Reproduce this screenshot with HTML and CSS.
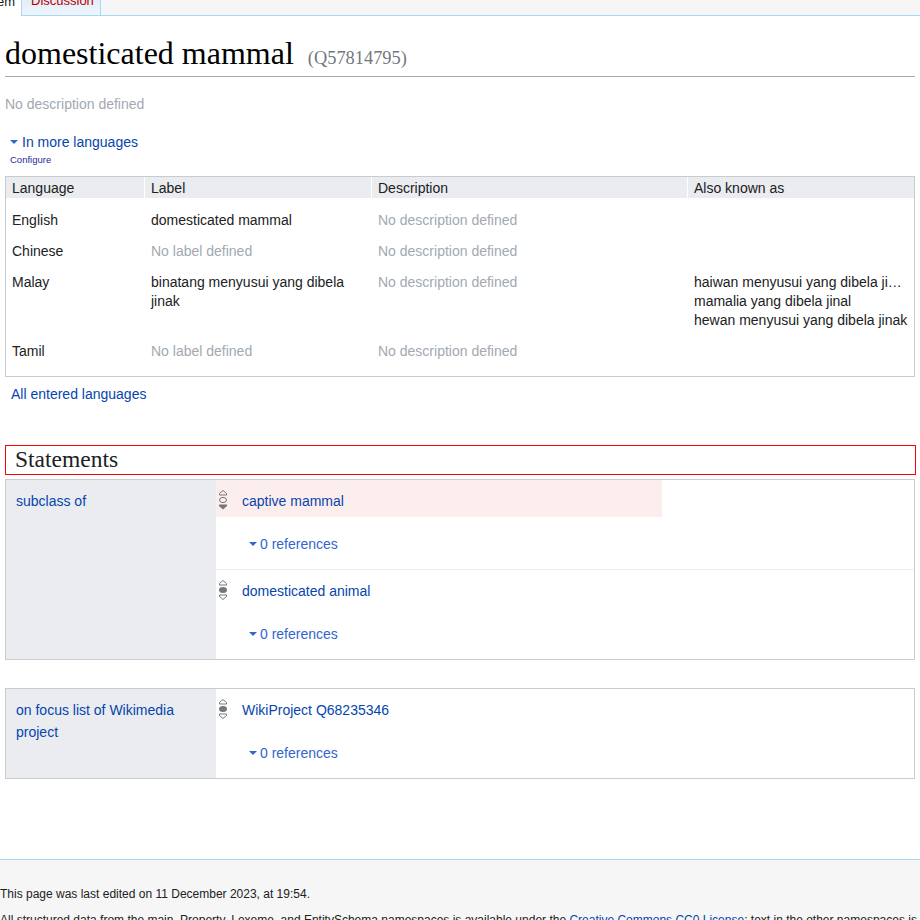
FILE: index.html
```html
<!DOCTYPE html>
<html lang="en">
<head>
<meta charset="utf-8">
<title>domesticated mammal - Wikidata</title>
<link rel="stylesheet" href="styles.css">
</head>
<body>
<div class="tabs">
  <div class="tab tab-item"><span>Item</span></div>
  <div class="tab tab-talk"><span>Discussion</span></div>
  <div class="tabs-rest"></div>
</div>

<main class="content">
  <h1 class="title">domesticated mammal<span class="qid">(Q57814795)</span></h1>
  <p class="nodesc">No description defined</p>

  <div class="toggler"><span class="tri"></span><a>In more languages</a></div>
  <div class="configure"><a>Configure</a></div>

  <div class="langtable">
    <div class="lt-row lt-head">
      <div class="c">Language</div>
      <div class="c">Label</div>
      <div class="c">Description</div>
      <div class="c">Also known as</div>
    </div>
    <div class="lt-body">
      <div class="lt-row">
        <div class="c">English</div>
        <div class="c">domesticated mammal</div>
        <div class="c muted">No description defined</div>
        <div class="c"></div>
      </div>
      <div class="lt-row">
        <div class="c">Chinese</div>
        <div class="c muted">No label defined</div>
        <div class="c muted">No description defined</div>
        <div class="c"></div>
      </div>
      <div class="lt-row">
        <div class="c">Malay</div>
        <div class="c">binatang menyusui yang dibela jinak</div>
        <div class="c muted">No description defined</div>
        <div class="c aliases">
          <div class="alias">haiwan menyusui yang dibela jinak</div>
          <div class="alias">mamalia yang dibela jinal</div>
          <div class="alias">hewan menyusui yang dibela jinak</div>
        </div>
      </div>
      <div class="lt-row">
        <div class="c">Tamil</div>
        <div class="c muted">No label defined</div>
        <div class="c muted">No description defined</div>
        <div class="c"></div>
      </div>
    </div>
  </div>

  <div class="alllangs"><a>All entered languages</a></div>

  <h2 class="stmt-heading">Statements</h2>

  <section class="sgroup">
    <div class="prop"><a>subclass of</a></div>
    <div class="stmts">
      <div class="stmt">
        <div class="snak hl">
          <svg class="rank" width="10" height="22" viewBox="0 0 10 22"><polygon points="5,1.5 8.5,4.5 8.5,6 1.5,6 1.5,4.5" fill="none" stroke="#72777d"/><ellipse cx="5" cy="11" rx="3.5" ry="2.6" fill="none" stroke="#72777d"/><polygon points="1,15.5 9,15.5 9,17 5,20.5 1,17" fill="#72777d"/></svg>
          <a>captive mammal</a>
        </div>
        <div class="refs"><span class="tri"></span><a>0 references</a></div>
      </div>
      <div class="stmt">
        <div class="snak">
          <svg class="rank" width="10" height="22" viewBox="0 0 10 22"><polygon points="5,1.5 8.5,4.5 8.5,6 1.5,6 1.5,4.5" fill="none" stroke="#72777d"/><ellipse cx="5" cy="11" rx="4" ry="3" fill="#72777d"/><polygon points="1.5,16 8.5,16 8.5,17.5 5,20.5 1.5,17.5" fill="none" stroke="#72777d"/></svg>
          <a>domesticated animal</a>
        </div>
        <div class="refs"><span class="tri"></span><a>0 references</a></div>
      </div>
    </div>
  </section>

  <section class="sgroup second">
    <div class="prop"><a>on focus list of Wikimedia project</a></div>
    <div class="stmts">
      <div class="stmt">
        <div class="snak">
          <svg class="rank" width="10" height="22" viewBox="0 0 10 22"><polygon points="5,1.5 8.5,4.5 8.5,6 1.5,6 1.5,4.5" fill="none" stroke="#72777d"/><ellipse cx="5" cy="11" rx="4" ry="3" fill="#72777d"/><polygon points="1.5,16 8.5,16 8.5,17.5 5,20.5 1.5,17.5" fill="none" stroke="#72777d"/></svg>
          <a>WikiProject Q68235346</a>
        </div>
        <div class="refs"><span class="tri"></span><a>0 references</a></div>
      </div>
    </div>
  </section>
</main>

<footer class="footer">
  <ul>
    <li>This page was last edited on 11 December 2023, at 19:54.</li>
    <li>All structured data from the main, Property, Lexeme, and EntitySchema namespaces is available under the <a>Creative Commons CC0 License</a>; text in the other namespaces is available under the <a>Creative Commons Attribution-ShareAlike License</a>; additional terms may apply.</li>
  </ul>
</footer>
</body>
</html>
```

FILE: styles.css
```css
html, body {
  margin: 0;
  padding: 0;
  background: #fff;
}

body {
  font-family: "Liberation Sans", Arial, sans-serif;
  font-size: 14px;
  color: #202122;
}

a {
  color: #0645ad;
  text-decoration: none;
}

/* tabs */
.tabs {
  display: flex;
  height: 16px;
  overflow: hidden;
}

.tab {
  display: flex;
  align-items: flex-end;
  height: 16px;
  box-sizing: border-box;
  font-size: 13px;
  white-space: nowrap;
  overflow: hidden;
}

.tab span {
  line-height: 13px;
  padding-bottom: 8px;
}

.tab-item {
  width: 21px;
  justify-content: flex-end;
  padding-right: 6px;
  background: #fff;
  color: #202122;
}

.tab-talk {
  width: 80px;
  padding-left: 9px;
  border-left: 1px solid #a7d7f9;
  border-right: 1px solid #a7d7f9;
  border-bottom: 1px solid #a7d7f9;
  background: linear-gradient(to bottom, #e4eef9 0%, #eef5fc 100%);
  color: #ba0000;
}

.tabs-rest {
  flex: 1;
  height: 16px;
  box-sizing: border-box;
  background: #f6f6f6;
  border-bottom: 1px solid #a7d7f9;
}

/* main content */
.content {
  padding: 0 5px;
}

.title {
  margin: 16px 0 0;
  height: 42px;
  padding-bottom: 2px;
  border-bottom: 1px solid #a2a9b1;
  font-family: "Liberation Serif", "Times New Roman", serif;
  font-weight: normal;
  font-size: 32px;
  line-height: 42px;
  color: #000;
}

.qid {
  margin-left: 14px;
  font-size: 18.4px;
  line-height: 20px;
  color: #72777d;
}

.nodesc {
  margin: 17px 0 0;
  line-height: 20px;
  color: #a2a9b1;
}

.toggler {
  display: flex;
  align-items: center;
  margin-top: 18px;
  padding-left: 5px;
  line-height: 20px;
}

.tri {
  display: inline-block;
  flex: none;
  width: 0;
  height: 0;
  border-left: 4px solid transparent;
  border-right: 4px solid transparent;
  border-top: 4px solid #36c;
  margin-right: 4px;
}

.configure {
  margin-top: 2px;
  padding-left: 5px;
  font-size: 9.5px;
  line-height: 12px;
}

.configure a {
  color: #2a2a9a;
}

/* language table */
.langtable {
  margin-top: 10px;
  border: 1px solid #c8ccd1;
}

.lt-row {
  display: grid;
  grid-template-columns: 139px 227px 316px 1fr;
}

.lt-head {
  height: 21px;
  background: #eaecf0;
}

.lt-head .c {
  padding-top: 1px;
  line-height: 20px;
  border-right: 1px solid #fff;
}

.lt-head .c:last-child {
  border-right: 0;
}

.c {
  padding: 0 6px;
  min-width: 0;
}

.lt-body {
  padding: 7px 0 9px;
}

.lt-body .c {
  padding-top: 6px;
  padding-bottom: 6px;
  line-height: 19px;
}

.muted {
  color: #a2a9b1;
}

.alias {
  white-space: nowrap;
  overflow: hidden;
  text-overflow: ellipsis;
}

.alllangs {
  margin-top: 7px;
  padding-left: 6px;
  line-height: 20px;
}

/* statements */
.stmt-heading {
  margin: 41px -1px 0 0;
  height: 28px;
  padding-left: 9px;
  border: 1px solid #f00;
  font-family: "Liberation Serif", "Times New Roman", serif;
  font-weight: normal;
  font-size: 23.5px;
  line-height: 27px;
}

.sgroup {
  display: grid;
  grid-template-columns: 210px 1fr;
  margin-top: 4px;
  border: 1px solid #c8ccd1;
}

.sgroup.second {
  margin-top: 28px;
}

.prop {
  background: #eaecf0;
  padding: 10px 10px 0;
  line-height: 22px;
}

.stmt + .stmt {
  border-top: 1px solid #eaecf0;
}

.snak {
  display: flex;
  align-items: flex-start;
  padding: 11px 0 6px;
  line-height: 20px;
}

.snak.hl {
  width: 446px;
  background: #fdeeee;
}

.rank {
  flex: none;
  margin: -2px 14px 0 2px;
}

.refs {
  display: flex;
  align-items: center;
  padding: 17px 0 15px 33px;
  line-height: 20px;
}

.refs .tri {
  margin-right: 3px;
}

.refs a {
  color: #36c;
}

/* footer */
.footer {
  margin-top: 80px;
  background: #f6f6f6;
  border-top: 1px solid #a7d7f9;
  padding-top: 27px;
  padding-bottom: 20px;
}

.footer ul {
  margin: 0;
  padding: 0;
  list-style: none;
}

.footer li {
  font-size: 12px;
  line-height: 14px;
  margin-bottom: 12px;
  color: #202122;
}
```
